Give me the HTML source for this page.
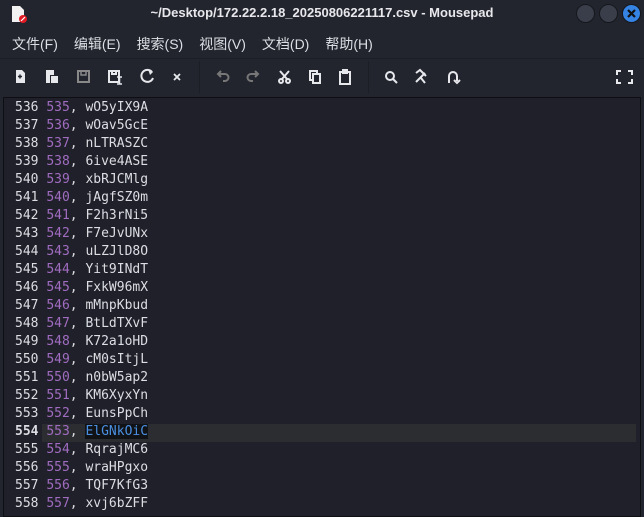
<!DOCTYPE html>
<html><head><meta charset="utf-8"><style>
*{margin:0;padding:0;box-sizing:border-box}
body{width:644px;height:511px;background:#22252e;overflow:hidden;font-family:"Liberation Sans","Noto Sans CJK SC",sans-serif;color:#dfe1e6;position:relative}
.title{position:absolute;top:0;left:0;width:644px;height:28px;text-align:center;font-weight:bold;font-size:13px;line-height:26px;color:#e8e8ec}
.btn{position:absolute;top:4px;width:19px;height:19px;border-radius:50%;background:#3a3e4a;border:1px solid #15171c}
.menu{position:absolute;top:34px;left:12px;font-size:14px;color:#dcdfe4}
.menu span{margin-right:16px}
.tb{position:absolute;top:58px;left:0;width:644px;height:38px;border-top:1px solid #1c1e25}
.ed{position:absolute;left:3px;top:97px;width:638px;height:420px;background:#1f2029;border:1px solid #0e0f12}
.ln{position:absolute;left:15px;font-family:"DejaVu Sans Mono","Liberation Mono",monospace;font-size:13px;line-height:18px;white-space:pre;color:#dcdee4}
.p{color:#a06cc0}
.hl{position:absolute;left:42px;width:594px;height:18px;background:#2c2d31}
.sel{background:#101216;color:#4a8fe0}
</style></head><body>
<svg style="position:absolute;left:11px;top:5px" width="16" height="18"><path d="M1 1h8l4 4v12H1z" fill="#f2f2f2"/><circle cx="12" cy="14" r="4" fill="#e01b24"/><path d="M10 16l4-4" stroke="#fff" stroke-width="1.2"/></svg>
<div class="title">~/Desktop/172.22.2.18_20250806221117.csv - Mousepad</div>
<div class="btn" style="left:576px"></div>
<div class="btn" style="left:599px"></div>
<div class="btn" style="left:622px;background:#3584e4"><svg width="17" height="17"><path d="M5 5l7 7M12 5l-7 7" stroke="#111" stroke-width="2.2"/></svg></div>
<div class="menu"><span>文件(F)</span><span>编辑(E)</span><span>搜索(S)</span><span>视图(V)</span><span>文档(D)</span><span>帮助(H)</span></div>
<div class="tb"></div>
<svg style="position:absolute;left:0;top:61px" width="644" height="34" fill="none" stroke="#e6e8ec" stroke-width="2">
<path d="M16 9h6l3 3v10H16z" fill="#e6e8ec" stroke="none"/><path d="M18 15.5h4M20 13.5v4" stroke="#22252e" stroke-width="1.5"/>
<path d="M46 9h8v5h-4v8h-4z" fill="#e6e8ec" stroke="none"/><rect x="51" y="15" width="7" height="7" fill="#e6e8ec" stroke="none"/>
<rect x="78" y="10" width="11" height="11" stroke="#888"/><path d="M81 10v4h5v-4" stroke="#888" stroke-width="1.5"/>
<rect x="109" y="10" width="10" height="11"/><path d="M112 10v3h4v-3"/><path d="M117 16h5M119.5 16v7M117 23h5" stroke-width="1.5"/>
<path d="M152 11a6 6 0 1 0 1 6"/><path d="M148 8l5 3-3 3z" fill="#e6e8ec" stroke="none"/>
<path d="M174 13l6 6M180 13l-6 6" stroke-width="1.8"/>
<path d="M219 13h6a3.5 3.5 0 0 1 0 7h-2M221 10l-3 3 3 3" stroke="#777"/>
<path d="M257 13h-6a3.5 3.5 0 0 0 0 7h2M255 10l3 3-3 3" stroke="#777"/>
<circle cx="281" cy="20" r="2"/><circle cx="288" cy="20" r="2"/><path d="M282 18l7-8M287 18l-7-8"/>
<rect x="310" y="10" width="7" height="9"/><rect x="313" y="13" width="7" height="9" fill="#22252e"/>
<rect x="340" y="11" width="10" height="12"/><rect x="343" y="9" width="4" height="3" fill="#e6e8ec"/>
<circle cx="390" cy="15" r="4"/><path d="M393 18l4 4"/>
<path d="M416 21l9-9M416 12l4 -3 6 6" /><path d="M421 17l4 5"/>
<path d="M449 22v-7a4 4 0 0 1 8 0v5M454 19l3 3 3-3"/>
<path d="M617 14v-4h4M632 14v-4h-4M617 18v4h4M632 18v4h-4" stroke-width="2"/>
</svg>
<div style="position:absolute;left:199px;top:61px;width:1px;height:32px;background:#1c1e25"></div>
<div style="position:absolute;left:368px;top:61px;width:1px;height:32px;background:#1c1e25"></div>
<div class="ed"></div>
<div class="hl" style="top:424px"></div>
<div class="ln" style="top:99px"><span>536 </span><span class="p">535</span>, wO5yIX9A
537 <span class="p">536</span>, wOav5GcE
538 <span class="p">537</span>, nLTRASZC
539 <span class="p">538</span>, 6ive4ASE
540 <span class="p">539</span>, xbRJCMlg
541 <span class="p">540</span>, jAgfSZ0m
542 <span class="p">541</span>, F2h3rNi5
543 <span class="p">542</span>, F7eJvUNx
544 <span class="p">543</span>, uLZJlD8O
545 <span class="p">544</span>, Yit9INdT
546 <span class="p">545</span>, FxkW96mX
547 <span class="p">546</span>, mMnpKbud
548 <span class="p">547</span>, BtLdTXvF
549 <span class="p">548</span>, K72a1oHD
550 <span class="p">549</span>, cM0sItjL
551 <span class="p">550</span>, n0bW5ap2
552 <span class="p">551</span>, KM6XyxYn
553 <span class="p">552</span>, EunsPpCh
<b>554</b> <span class="p">553</span>, <span class="sel">ElGNkOiC</span>
555 <span class="p">554</span>, RqrajMC6
556 <span class="p">555</span>, wraHPgxo
557 <span class="p">556</span>, TQF7KfG3
558 <span class="p">557</span>, xvj6bZFF</div>
</body></html>
